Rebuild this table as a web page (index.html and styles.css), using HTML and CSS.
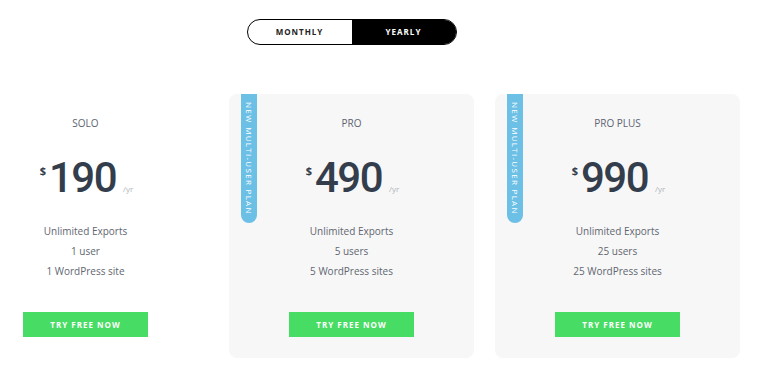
FILE: index.html
```html
<!DOCTYPE html>
<html>
<head>
<meta charset="utf-8">
<link rel="stylesheet" href="styles.css">
</head>
<body>
<div class="page">
  <div class="toggle">
    <span class="opt">MONTHLY</span>
    <span class="opt active">YEARLY</span>
  </div>
  <div class="plans">
    <div class="plan">
      <div class="name">SOLO</div>
      <div class="price"><span class="cur">$</span><span class="amt">190</span><span class="per">/yr</span></div>
      <ul class="features">
        <li>Unlimited Exports</li>
        <li>1 user</li>
        <li>1 WordPress site</li>
      </ul>
      <a class="btn">TRY FREE NOW</a>
    </div>
    <div class="plan boxed">
      <div class="ribbon"><span>NEW MULTI-USER PLAN</span></div>
      <div class="name">PRO</div>
      <div class="price"><span class="cur">$</span><span class="amt">490</span><span class="per">/yr</span></div>
      <ul class="features">
        <li>Unlimited Exports</li>
        <li>5 users</li>
        <li>5 WordPress sites</li>
      </ul>
      <a class="btn">TRY FREE NOW</a>
    </div>
    <div class="plan boxed">
      <div class="ribbon"><span>NEW MULTI-USER PLAN</span></div>
      <div class="name">PRO PLUS</div>
      <div class="price"><span class="cur">$</span><span class="amt">990</span><span class="per">/yr</span></div>
      <ul class="features">
        <li>Unlimited Exports</li>
        <li>25 users</li>
        <li>25 WordPress sites</li>
      </ul>
      <a class="btn">TRY FREE NOW</a>
    </div>
  </div>
</div>
</body>
</html>
```
FILE: styles.css
```css
html, body {
  margin: 0;
  padding: 0;
  background: #ffffff;
  overflow: hidden;
}
body {
  width: 757px;
  height: 376px;
  font-family: "Open Sans", "Liberation Sans", sans-serif;
}
.page {
  width: 703px;
  padding-top: 19px;
}
.toggle {
  width: 210px;
  height: 26px;
  margin: 0 auto;
  box-sizing: border-box;
  border: 1.5px solid #000;
  border-radius: 13px;
  display: flex;
  overflow: hidden;
}
.opt {
  flex: 1;
  display: flex;
  align-items: center;
  justify-content: center;
  font-size: 8px;
  font-weight: 700;
  letter-spacing: 1px;
  color: #222;
  padding-bottom: 1px;
}
.opt.active {
  background: #000;
  color: #fff;
}
.plans {
  margin-top: 49px;
  display: flex;
  justify-content: center;
  gap: 21px;
}
.plan {
  position: relative;
  flex: 0 0 245px;
  box-sizing: border-box;
  padding: 22px 0 21px;
  display: flex;
  flex-direction: column;
  align-items: center;
  border-radius: 8px;
}
.plan.boxed {
  background: #f7f7f7;
}
.ribbon {
  position: absolute;
  left: 12px;
  top: 0;
  width: 16px;
  height: 129px;
  background: #6cc0e6;
  border-radius: 0 0 8px 8px;
  display: flex;
  justify-content: center;
  padding-top: 8px;
  box-sizing: border-box;
}
.ribbon span {
  writing-mode: vertical-rl;
  color: #fff;
  font-size: 8px;
  letter-spacing: 1.3px;
  line-height: 16px;
}
.name {
  font-size: 10px;
  line-height: 14px;
  color: #5d6472;
}
.price {
  margin-top: 27px;
  display: flex;
  align-items: flex-start;
  color: #333d4b;
  padding-left: 2px;
}
.cur {
  font-size: 11px;
  line-height: 11px;
  font-weight: 700;
  margin-top: 8px;
  margin-right: 3px;
}
.amt {
  font-family: Roboto, "Liberation Sans", sans-serif;
  font-weight: 500;
  font-size: 42px;
  line-height: 42px;
  letter-spacing: -1.5px;
}
.per {
  align-self: flex-end;
  font-size: 8px;
  line-height: 8px;
  color: #b3b5b8;
  margin-left: 7px;
  margin-bottom: 6px;
}
.features {
  list-style: none;
  margin: 22px 0 0;
  padding: 0;
  text-align: center;
}
.features li {
  font-size: 10px;
  line-height: 20px;
  color: #5f6670;
}
.btn {
  margin-top: 31px;
  width: 125px;
  height: 25px;
  background: #47dc63;
  color: #fff;
  font-size: 8px;
  font-weight: 700;
  letter-spacing: 1px;
  display: flex;
  align-items: center;
  justify-content: center;
}
```
